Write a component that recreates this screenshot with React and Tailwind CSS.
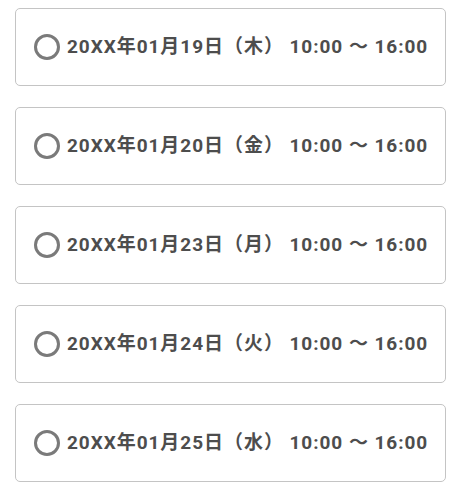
const dates = [
  '20XX年01月19日（木）',
  '20XX年01月20日（金）',
  '20XX年01月23日（月）',
  '20XX年01月24日（火）',
  '20XX年01月25日（水）',
]

function DateOption({ label }) {
  return (
    <label className="flex h-[78px] items-center rounded-[5px] border border-[#c4c4c4] bg-white pl-[18px]">
      <span className="h-[26px] w-[26px] shrink-0 rounded-full border-[3px] border-[#7a7a7a]" />
      <span className="ml-[7px] whitespace-nowrap text-[19px] font-bold tracking-[0.05em] text-[#4d4d4d]">
        {label} 10:00 〜 16:00
      </span>
    </label>
  )
}

export default function App() {
  return (
    <div
      className="flex min-h-screen flex-col gap-[21px] bg-white pb-1 pl-[15px] pr-[5px] pt-2"
      style={{ fontFamily: 'Roboto, "Noto Sans CJK JP", sans-serif' }}
    >
      {dates.map((d) => (
        <DateOption key={d} label={d} />
      ))}
    </div>
  )
}
